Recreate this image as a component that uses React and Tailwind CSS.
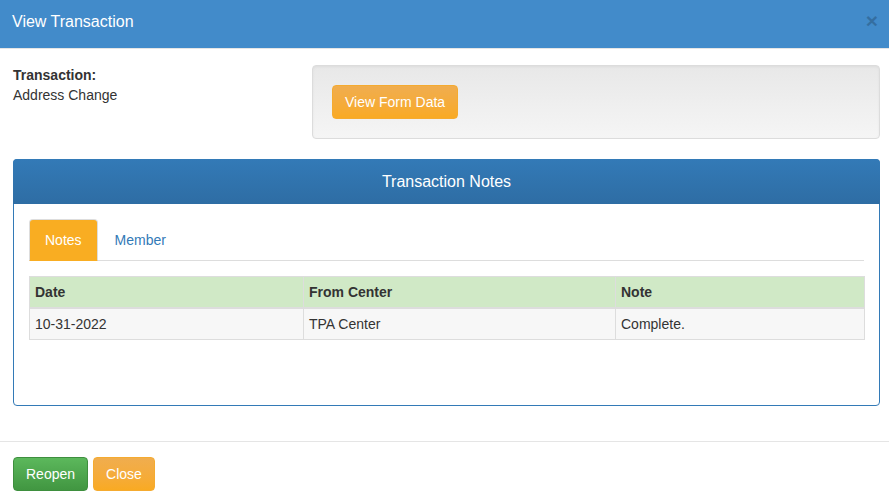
export default function App() {
  return (
    <div className="w-[889px] h-[502px] bg-white text-[14px] leading-[20px] text-[#333] overflow-hidden" style={{ fontFamily: '"Liberation Sans", Arial, sans-serif' }}>
      {/* Header */}
      <div className="h-[49px] bg-[#428bca] border-b border-[#e5e5e5] flex items-start justify-between pl-[12px] pr-[11px] pt-[10px]">
        <h4 className="text-[16px] leading-[22px] text-white mt-[1px]">View Transaction</h4>
        <button className="text-[21px] font-bold leading-[21px] text-black opacity-20">×</button>
      </div>

      {/* Body */}
      <div className="px-[13px] pt-[16px] pr-[9px]">
        <div className="flex">
          <div className="w-[299px]">
            <div className="font-bold">Transaction:</div>
            <div>Address Change</div>
          </div>
          <div className="flex-1 h-[74px] rounded-[4px] border border-[#dcdcdc] bg-gradient-to-b from-[#e8e8e8] to-[#f5f5f5] shadow-[inset_0_1px_3px_rgba(0,0,0,0.05)] p-[19px]">
            <button className="h-[34px] px-[12px] rounded-[4px] border border-[#f5ab30] bg-gradient-to-b from-[#f0ad4e] to-[#f9aa22] text-white text-[14px] leading-[20px]">
              View Form Data
            </button>
          </div>
        </div>

        {/* Panel */}
        <div className="mt-[20px] w-[867px] rounded-[4px] border border-[#337ab7]">
          <div className="h-[45px] -mt-px -mx-px rounded-t-[4px] bg-gradient-to-b from-[#337ab7] to-[#2e6da4] flex items-center justify-center">
            <h3 className="text-[16px] leading-[18px] text-white">Transaction Notes</h3>
          </div>
          <div className="h-[201px] px-[15px] pt-[15px]">
            <div className="flex items-start h-[42px] border-b border-[#ddd]">
              <div className="h-[42px] rounded-t-[4px] border border-[#ddd] border-b-transparent bg-[#f9ad22] text-white px-[15px] py-[10px] leading-[20px]">
                Notes
              </div>
              <div className="ml-[1px] px-[15px] py-[10px] border-x border-t border-transparent text-[#337ab7] leading-[20px]">
                Member
              </div>
            </div>
            <table className="mt-[15px] w-[836px] table-fixed border-collapse border border-[#ddd]">
              <thead>
                <tr className="bg-[#d0e9c6]">
                  <th className="w-[274px] text-left font-bold border border-[#ddd] px-[5px] py-[5px] leading-[20px] border-b-2">Date</th>
                  <th className="w-[312px] text-left font-bold border border-[#ddd] px-[5px] py-[5px] leading-[20px] border-b-2">From Center</th>
                  <th className="text-left font-bold border border-[#ddd] px-[5px] py-[5px] leading-[20px] border-b-2">Note</th>
                </tr>
              </thead>
              <tbody>
                <tr className="bg-[#f7f7f7]">
                  <td className="border border-[#ddd] px-[5px] py-[5px] leading-[20px]">10-31-2022</td>
                  <td className="border border-[#ddd] px-[5px] py-[5px] leading-[20px]">TPA Center</td>
                  <td className="border border-[#ddd] px-[5px] py-[5px] leading-[20px]">Complete.</td>
                </tr>
              </tbody>
            </table>
          </div>
        </div>
      </div>

      {/* Footer */}
      <div className="mt-[35px] border-t border-[#e5e5e5] px-[13px] pt-[15px] flex gap-[5px]">
        <button className="h-[34px] px-[12px] rounded-[4px] border border-[#3e8f3e] bg-gradient-to-b from-[#5cb85c] to-[#419641] text-white leading-[20px]">
          Reopen
        </button>
        <button className="h-[34px] px-[12px] rounded-[4px] border border-[#f5ab30] bg-gradient-to-b from-[#f0ad4e] to-[#f9aa22] text-white leading-[20px]">
          Close
        </button>
      </div>
    </div>
  );
}
